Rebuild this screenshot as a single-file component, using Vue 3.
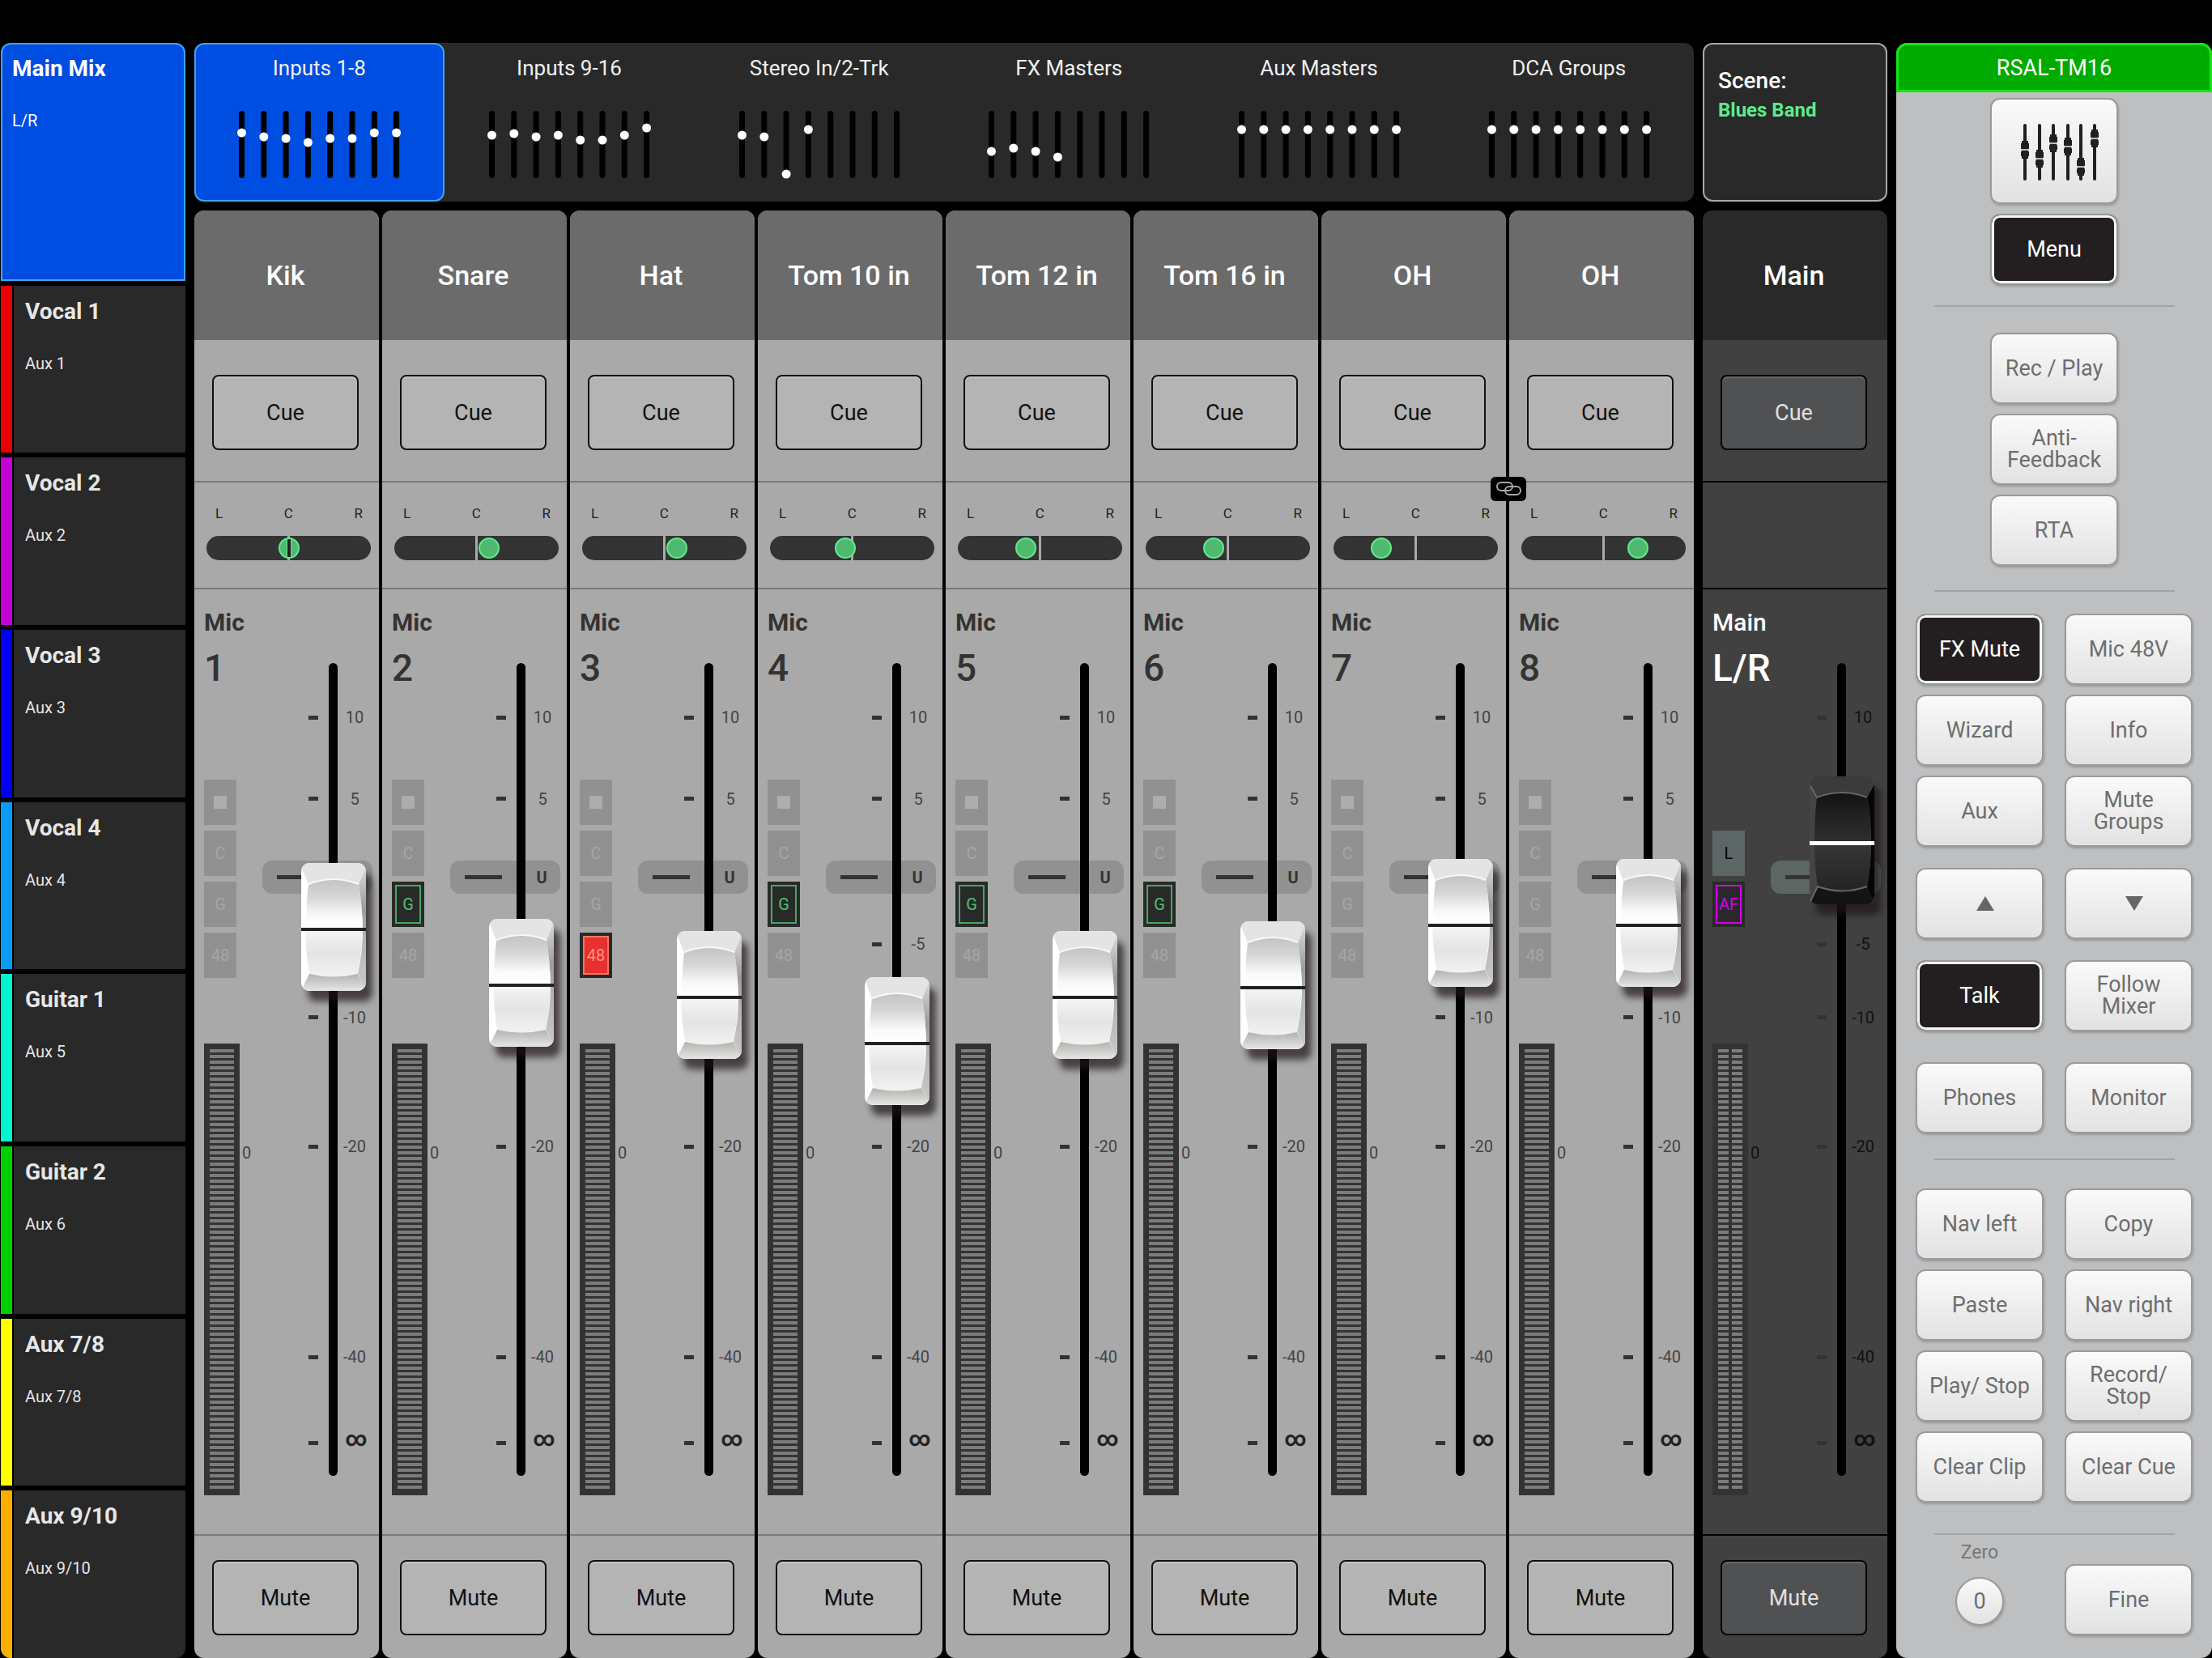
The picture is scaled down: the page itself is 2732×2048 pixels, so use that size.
<script setup>
import { ref, reactive } from "vue"

const mixes = [
  { name: "Vocal 1", sub: "Aux 1", color: "#e80000" },
  { name: "Vocal 2", sub: "Aux 2", color: "#c400d8" },
  { name: "Vocal 3", sub: "Aux 3", color: "#0000f0" },
  { name: "Vocal 4", sub: "Aux 4", color: "#0a9cf5" },
  { name: "Guitar 1", sub: "Aux 5", color: "#00f5d0" },
  { name: "Guitar 2", sub: "Aux 6", color: "#00d000" },
  { name: "Aux 7/8", sub: "Aux 7/8", color: "#ffff00" },
  { name: "Aux 9/10", sub: "Aux 9/10", color: "#fbb000" },
]

const tab = ref("Inputs 1-8")
const tabs = [
  { name: "Inputs 1-8", dots: [27, 32, 34, 39, 34, 34, 27, 27] },
  { name: "Inputs 9-16", dots: [30, 28, 32, 30, 36, 36, 30, 21] },
  { name: "Stereo In/2-Trk", dots: [30, 32, 78, 23] },
  { name: "FX Masters", dots: [50, 46, 50, 57] },
  { name: "Aux Masters", dots: [23, 23, 23, 23, 23, 23, 23, 23] },
  { name: "DCA Groups", dots: [23, 23, 23, 23, 23, 23, 23, 23] },
]

// fader is the distance from the top of the slot, in percent
const strips = reactive([
  { name: "Kik", type: "Mic", num: "1", pan: 50, fader: 32.8 },
  { name: "Snare", type: "Mic", num: "2", pan: 59, fader: 39.6, gate: true },
  { name: "Hat", type: "Mic", num: "3", pan: 59, fader: 41.1, phantom: true },
  { name: "Tom 10 in", type: "Mic", num: "4", pan: 45, fader: 46.8, gate: true },
  { name: "Tom 12 in", type: "Mic", num: "5", pan: 40, fader: 41.1, gate: true },
  { name: "Tom 16 in", type: "Mic", num: "6", pan: 40, fader: 39.9, gate: true },
  { name: "OH", type: "Mic", num: "7", pan: 26, fader: 32.3 },
  { name: "OH", type: "Mic", num: "8", pan: 74, fader: 32.3, linked: true },
  { name: "Main", type: "Main", num: "L/R", fader: 22.1, main: true },
])

const scale = [
  { label: "10", pos: 6.7 },
  { label: "5", pos: 16.7 },
  { label: "U", pos: 26.3, unity: true },
  { label: "-5", pos: 34.6 },
  { label: "-10", pos: 43.6 },
  { label: "-20", pos: 59.5 },
  { label: "-40", pos: 85.4 },
  { label: "∞", pos: 96, inf: true },
]

const menuIcon = [[43, 64], [61, 75], [78, 56], [96, 60], [112, 85], [129, 50]]
const tools = ["Rec / Play", "Anti- Feedback", "RTA"]
const groups = [
  ["FX Mute", "Mic 48V", "Wizard", "Info", "Aux", "Mute Groups"],
  ["up", "down"],
  ["Talk", "Follow Mixer"],
  ["Phones", "Monitor"],
]
const navs = ["Nav left", "Copy", "Paste", "Nav right", "Play/ Stop", "Record/ Stop", "Clear Clip", "Clear Cue"]
const active = ["FX Mute", "Talk"]
</script>

<template>
  <div class="mixer">
    <svg class="defs" width="0" height="0" aria-hidden="true">
      <defs>
        <linearGradient id="w-up" x1="0" y1="0" x2="0" y2="1">
          <stop offset="0" stop-color="#c4c4c4" />
          <stop offset="0.35" stop-color="#d6d6d6" />
          <stop offset="0.75" stop-color="#fafafa" />
          <stop offset="1" stop-color="#fff" />
        </linearGradient>
        <linearGradient id="w-low" x1="0" y1="0" x2="0" y2="1">
          <stop offset="0" stop-color="#f4f4f4" />
          <stop offset="0.5" stop-color="#e4e4e4" />
          <stop offset="1" stop-color="#f2f2f2" />
        </linearGradient>
        <linearGradient id="w-bottom" x1="0" y1="0" x2="0" y2="1">
          <stop offset="0" stop-color="#b2b2ae" />
          <stop offset="1" stop-color="#e6e6e6" />
        </linearGradient>
        <linearGradient id="w-side" x1="0" y1="0" x2="0" y2="1">
          <stop offset="0" stop-color="#d8d8d8" />
          <stop offset="0.35" stop-color="#9c9c9c" />
          <stop offset="0.6" stop-color="#b4b4b4" />
          <stop offset="1" stop-color="#c8c8c8" />
        </linearGradient>
        <linearGradient id="b-up" x1="0" y1="0" x2="0" y2="1">
          <stop offset="0" stop-color="#131313" />
          <stop offset="1" stop-color="#303030" />
        </linearGradient>
        <linearGradient id="b-low" x1="0" y1="0" x2="0" y2="1">
          <stop offset="0" stop-color="#373737" />
          <stop offset="1" stop-color="#242424" />
        </linearGradient>
      </defs>
    </svg>

    <nav class="mixes">
      <button class="main-mix">
        <strong>Main Mix</strong>
        <span>L/R</span>
      </button>
      <button v-for="mix in mixes" :key="mix.name" class="mix">
        <i class="mix-color" :style="{ backgroundColor: mix.color }"></i>
        <span class="mix-body">
          <strong>{{ mix.name }}</strong>
          <span>{{ mix.sub }}</span>
        </span>
      </button>
    </nav>

    <main class="desk">
      <header class="top">
        <div class="tabs">
          <button v-for="t in tabs" :key="t.name" class="tab" :class="{ selected: tab === t.name }" @click="tab = t.name">
            <span>{{ t.name }}</span>
            <svg width="204" height="84" viewBox="0 0 204 84" aria-hidden="true">
              <rect v-for="n in 8" :key="n" :x="(n - 1) * 27.3 + 3" y="0" width="7" height="83" rx="3.5" fill="#000" />
              <circle v-for="(y, i) in t.dots" :key="i" :cx="i * 27.3 + 6.5" :cy="y" r="5.5" fill="#fff" />
            </svg>
          </button>
        </div>
        <section class="scene">
          <strong>Scene:</strong>
          <span>Blues Band</span>
        </section>
      </header>

      <div class="strips">
        <section v-for="(s, i) in strips" :key="i" class="strip" :class="{ 'strip-main': s.main }">
          <h2 class="strip-name">{{ s.name }}</h2>
          <div class="cue">
            <button class="key">Cue</button>
          </div>

          <div class="pan">
            <template v-if="!s.main">
              <div class="pan-labels"><span>L</span><span>C</span><span>R</span></div>
              <input v-model.number="s.pan" type="range" class="pan-slider" :class="{ centered: s.pan === 50 }" :aria-label="`Pan ${s.type} ${s.num}`" />
            </template>
            <div v-if="s.linked" class="link">
              <svg width="31" height="18" viewBox="0 0 31 18" fill="none" stroke="#a9a9a9" stroke-width="2" aria-hidden="true">
                <rect x="1" y="1" width="19" height="10" rx="5" />
                <rect x="11" y="6" width="19" height="10" rx="5" />
              </svg>
            </div>
          </div>

          <div class="fader">
            <div class="info">
              <div class="type">{{ s.type }}</div>
              <div class="num">{{ s.num }}</div>
              <div v-if="s.main" class="badges">
                <span class="badge-none"></span>
                <span class="badge badge-l">L</span>
                <span class="badge badge-af">AF</span>
                <span class="badge-none"></span>
              </div>
              <div v-else class="badges">
                <span class="badge"><i class="square"></i></span>
                <span class="badge">C</span>
                <span class="badge" :class="{ 'badge-gate': s.gate }">G</span>
                <span class="badge" :class="{ 'badge-phantom': s.phantom }">48</span>
              </div>
              <div class="meter">
                <i class="leds"></i>
                <i v-if="s.main" class="leds"></i>
                <span class="meter-zero">0</span>
              </div>
            </div>

            <div class="lane">
              <div v-for="m in scale" :key="m.label" class="mark" :class="{ unity: m.unity, inf: m.inf }" :style="{ top: m.pos + '%' }">
                <i class="tick"></i>
                <span class="mark-label">{{ m.label }}</span>
              </div>
              <input v-model.number="s.fader" type="range" min="0" max="100" step="0.1" class="slot" :aria-label="`Level ${s.type} ${s.num}`" />
              <svg v-if="!s.main" class="cap" viewBox="0 0 80 158" :style="{ top: s.fader + '%' }" aria-hidden="true">
                <rect width="80" height="158" rx="10" fill="#fff" />
                <path d="M10 0H70Q76 0 79 6L71 27Q40 17 9 27L1 6Q4 0 10 0Z" fill="#e4e4e4" />
                <path d="M79 6L80 10V148L78 153L70 136Q76 110 76 82Q75 50 71 27Z" fill="url(#w-side)" />
                <path d="M9 27Q40 15 71 27Q75 50 76 80H6Q6 50 9 27Z" fill="url(#w-up)" />
                <path d="M9 26Q40 14 71 26" fill="none" stroke="#f8f8f8" stroke-width="2" />
                <path d="M5 84H76Q74 114 70 137Q40 144 10 137Q6 112 5 84Z" fill="url(#w-low)" />
                <path d="M10 137Q40 144 70 137L78 153Q75 158 70 158H10Q5 158 2 153Z" fill="url(#w-bottom)" />
                <rect y="80" width="80" height="4" fill="#222" />
              </svg>
              <svg v-else class="cap" viewBox="0 0 80 158" :style="{ top: s.fader + '%' }" aria-hidden="true">
                <rect width="80" height="158" rx="8" fill="#444" />
                <path d="M8 0H72Q78 1 79 8L71 26Q40 16 9 26L1 8Q2 1 8 0Z" fill="#3a3a3a" />
                <path d="M80 10V148L78 154L71 137Q76 110 76 82Q76 50 71 26Z" fill="#050505" />
                <path d="M9 26Q40 14 71 26Q75 50 76 82H6Q6 50 9 26Z" fill="url(#b-up)" />
                <path d="M6 82H76Q75 114 71 136Q40 146 10 136Q6 112 6 82Z" fill="url(#b-low)" />
                <path d="M10 136Q40 146 71 136L79 152Q77 158 70 158H10Q4 158 2 153Z" fill="#141414" />
                <path d="M1 12L9 26Q40 14 71 26M1 154L10 136Q40 147 71 136" fill="none" stroke="#666" stroke-width="2" />
                <rect y="80" width="80" height="5" fill="#fff" />
              </svg>
            </div>
          </div>

          <div class="mute">
            <button class="key">Mute</button>
          </div>
        </section>
      </div>
    </main>

    <aside class="panel">
      <h1 class="device">RSAL-TM16</h1>
      <div class="single">
        <button class="btn btn-faders" aria-label="Faders">
          <svg width="158" height="131" viewBox="0 0 158 131" aria-hidden="true">
            <g v-for="[x, y] in menuIcon" :key="x">
              <rect :x="x - 2" y="32" width="4" height="70" rx="2" fill="#231f20" />
              <path :d="`M${x - 4} ${y - 11}h8v3h1v6l-1 2h-8l-1-2v-6h1zM${x - 4} ${y + 1}h8l1 2v5h-1v3h-8v-3h-1v-5z`" fill="#231f20" />
              <rect :x="x - 4" :y="y - 1" width="8" height="2" fill="#bbb" />
            </g>
          </svg>
        </button>
        <button class="btn on">Menu</button>
      </div>
      <hr>
      <div class="single tools">
        <button v-for="t in tools" :key="t" class="btn">{{ t }}</button>
      </div>
      <hr>
      <div class="groups">
        <div v-for="(g, i) in groups" :key="i" class="pair">
          <button v-for="b in g" :key="b" class="btn" :class="{ on: active.includes(b) }" :aria-label="b">
            <svg v-if="b === 'up'" class="arrow" width="22" height="18" viewBox="0 0 22 18"><path d="M11 0L22 18H0Z" fill="#666" /></svg>
            <svg v-else-if="b === 'down'" class="arrow" width="22" height="18" viewBox="0 0 22 18"><path d="M0 0H22L11 18Z" fill="#666" /></svg>
            <template v-else>{{ b }}</template>
          </button>
        </div>
      </div>
      <hr>
      <div class="pair navs">
        <button v-for="n in navs" :key="n" class="btn">{{ n }}</button>
      </div>
      <hr>
      <div class="pair last">
        <div class="zero">
          <label for="zero">Zero</label>
          <button id="zero" class="round">0</button>
        </div>
        <button class="btn">Fine</button>
      </div>
    </aside>
  </div>
</template>

<style>
body {
  margin: 0;
  background: #000;
}
</style>

<style scoped>
.mixer {
  display: grid;
  grid-template-columns: 228fr 2091fr 390fr;
  gap: 11px;
  box-sizing: border-box;
  min-height: 100vh;
  padding: 53px 0 0 1px;
  background: #000;
  font-family: Roboto, "Liberation Sans", sans-serif;
}

.mixer * {
  box-sizing: border-box;
}

.defs {
  position: absolute;
}

button {
  margin: 0;
  padding: 0;
  border: none;
  background: none;
  font-family: inherit;
  cursor: pointer;
}

h1,
h2 {
  margin: 0;
  font-weight: 500;
}

strong {
  font-weight: 500;
}

.mixes {
  display: grid;
  grid-template-rows: 294fr repeat(8, 207fr);
  gap: 6px;
  min-width: 0;
}

.main-mix,
.mix-body {
  display: flex;
  flex-direction: column;
  justify-content: flex-start;
  gap: 36px;
  text-align: left;
  font-size: 20px;
  line-height: 24px;
}

.main-mix {
  padding: 14px 12px;
  border: 2px solid #3fa4f0;
  border-radius: 12px 12px 0 0;
  background: #004de1;
  color: #fff;
}

.mix {
  display: flex;
  gap: 2px;
}

.mix:last-child {
  border-radius: 0 0 12px 12px;
  overflow: hidden;
}

.mix-color {
  align-self: stretch;
  width: 14px;
}

.mix-body {
  flex: 1;
  align-self: stretch;
  padding: 16px 14px;
  background: #292929;
  color: #e6e6e6;
}

.mixes strong {
  font-size: 28px;
  font-weight: 700;
  line-height: 32px;
}

.desk {
  display: flex;
  flex-direction: column;
  gap: 11px;
  min-width: 0;
}

.top {
  display: grid;
  grid-template-columns: 1852fr 228fr;
  gap: 11px;
  height: 196px;
}

.tabs {
  display: grid;
  grid-template-columns: repeat(6, 1fr);
  border-radius: 12px;
  background: #292929;
}

.tab {
  display: flex;
  flex-direction: column;
  align-items: center;
  gap: 37px;
  padding-top: 13px;
  border: 2px solid transparent;
  border-radius: 12px;
  color: #f0f0f0;
  font-size: 26px;
  line-height: 32px;
}

.tab.selected {
  border-color: #3fa4f0;
  background: #004de1;
}

.scene {
  display: flex;
  flex-direction: column;
  gap: 4px;
  padding: 29px 17px;
  border: 2px solid #a9a9a9;
  border-radius: 12px;
  background: #292929;
  color: #fff;
  font-size: 28px;
  line-height: 32px;
}

.scene span {
  color: #5feb8b;
  font-size: 24px;
  font-weight: 700;
}

.strips {
  display: flex;
  flex: 1;
  gap: 4px;
}

.strip {
  display: flex;
  flex-direction: column;
  flex: 1 1 0;
  min-width: 0;
  border-radius: 12px;
  background: #a9a9a9;
  color: #333;
}

.strip-main {
  margin-left: 7px;
  background: #414141;
  color: #fff;
}

.strip-name {
  height: 160px;
  padding-right: 3px;
  border-radius: 12px 12px 0 0;
  background: #6b6b6b;
  color: #fff;
  font-size: 34px;
  line-height: 161px;
  text-align: center;
  white-space: nowrap;
}

.strip-main .strip-name {
  background: #292929;
}

.cue {
  height: 176px;
  padding: 43px 25px 0 22px;
  border-bottom: 2px solid #7a7a7a;
}

.key {
  width: 100%;
  height: 93px;
  border: 2px solid #111;
  border-radius: 8px;
  background: #b4b4b4;
  box-shadow: inset 0 2px 1px #c4c4c4;
  color: #111;
  font-size: 27px;
}

.strip-main .key {
  border-color: #000;
  background: #505153;
  box-shadow: inset 0 2px 1px #6a6a6a;
  color: #e0e0e0;
}

.pan {
  position: relative;
  height: 132px;
  padding: 28px 10px 0 15px;
  border-bottom: 2px solid #7a7a7a;
}

.strip-main .cue,
.strip-main .pan {
  border-color: #000;
}

.pan-labels {
  display: flex;
  justify-content: space-between;
  padding: 0 10px 0 11px;
  color: #222;
  font-size: 17px;
  line-height: 20px;
}

.pan-slider {
  display: block;
  appearance: none;
  width: 100%;
  height: 30px;
  margin: 18px 0 0;
  padding: 0;
  border-radius: 15px;
  background: linear-gradient(#a9a9a9, #a9a9a9) center / 3px 100% no-repeat #333;
}

.pan-slider::-webkit-slider-thumb {
  appearance: none;
  width: 26px;
  height: 26px;
  border: 2px solid #5feb8b;
  border-radius: 13px;
  background: #50b970;
}

.pan-slider.centered::-webkit-slider-thumb {
  background: linear-gradient(90deg, transparent 8px, #5feb8b 8px, #5feb8b 9px, #222 9px, #222 13px, #5feb8b 13px, #5feb8b 14px, transparent 14px) #50b970;
}

.link {
  position: absolute;
  top: -7px;
  left: -23px;
  z-index: 1;
  display: flex;
  align-items: center;
  justify-content: center;
  width: 44px;
  height: 30px;
  border-radius: 6px;
  background: #000;
}

.fader {
  display: flex;
  flex: 1;
}

.info {
  display: flex;
  flex-direction: column;
  flex: 1;
  min-width: 0;
  padding: 25px 0 48px 12px;
}

.type {
  font-size: 30px;
  font-weight: 500;
  line-height: 32px;
}

.num {
  margin-top: 16px;
  font-size: 46px;
  font-weight: 500;
  line-height: 48px;
}

.strip:not(.strip-main) .type {
  font-weight: 700;
}

.badges {
  display: flex;
  flex-direction: column;
  gap: 7px;
  margin-top: 114px;
}

.badge,
.badge-none {
  display: flex;
  align-items: center;
  justify-content: center;
  width: 40px;
  height: 56px;
}

.badge {
  background: #919191;
  color: #a6a6a6;
  font-size: 20px;
}

.square {
  width: 16px;
  height: 16px;
  background: #adadad;
}

.badge-gate,
.badge-phantom,
.badge-af {
  border: 4px solid #292929;
  background: #292929;
  color: #50c070;
  outline: 2px solid #45a862;
  outline-offset: -6px;
}

.badge-phantom {
  background: #e83030;
  color: #f79a7c;
  outline-color: #f0785a;
}

.badge-l {
  background: #5c6664;
  color: #000;
}

.badge-af {
  color: #d400ea;
  outline-color: #d400ea;
}

.meter {
  position: relative;
  display: flex;
  flex: 1;
  gap: 4px;
  width: 44px;
  min-height: 200px;
  margin-top: 81px;
  padding: 7px;
  background: #333;
}

.leds {
  flex: 1;
  background: repeating-linear-gradient(#7c7c7c 0 4px, #333 4px 7px);
}

.meter-zero {
  position: absolute;
  top: 22%;
  left: 47px;
  color: #444;
  font-size: 20px;
}

.strip-main .meter-zero {
  color: #111;
}

.lane {
  position: relative;
  width: 148px;
  margin: 91px 0 72px;
}

.mark {
  position: absolute;
  left: 0;
  right: 0;
  display: flex;
  align-items: center;
  gap: 20px;
  height: 0;
  padding-left: 61px;
}

.tick {
  width: 12px;
  height: 5px;
  background: #333;
}

.mark-label {
  width: 50px;
  color: #444;
  font-size: 20px;
  text-align: center;
}

.unity {
  right: 8px;
  left: 4px;
  gap: 26px;
  height: 41px;
  margin-top: -20px;
  padding-left: 18px;
  border-radius: 12px;
  background: #919191;
}

.unity .tick {
  flex: none;
  width: 46px;
}

.unity .mark-label {
  flex: none;
  width: 46px;
  color: #333;
  font-weight: 700;
}

.inf .mark-label {
  padding: 0 0 12px 4px;
  color: #222;
  font-size: 26px;
  font-weight: 700;
}

.strip-main .mark-label {
  color: #111;
}

.strip-main .unity {
  background: #5c6664;
}

.slot {
  position: absolute;
  top: 0;
  left: 86px;
  appearance: none;
  width: 11px;
  height: 100%;
  margin: 0;
  border-radius: 6px;
  background: #000;
  writing-mode: vertical-lr;
}

.slot::-webkit-slider-thumb {
  appearance: none;
  width: 11px;
  height: 11px;
  background: transparent;
}

.cap {
  position: absolute;
  left: 52px;
  width: 80px;
  height: 158px;
  margin-top: -82px;
  filter: drop-shadow(8px 13px 4px rgba(30, 20, 20, 0.7));
  pointer-events: none;
}

.mute {
  height: 153px;
  padding: 30px 25px 0 22px;
  border-top: 2px solid #7a7a7a;
}

.strip-main .mute {
  border-color: #000;
}

.panel {
  min-width: 0;
  padding-bottom: 24px;
  border-radius: 14px;
  background: #bdbfc1;
}

.device {
  height: 61px;
  border: 3px solid #14e614;
  border-radius: 14px 14px 0 0;
  background: #00ab00;
  color: #fff;
  font-size: 27px;
  font-weight: 400;
  line-height: 56px;
  text-align: center;
}

.single {
  display: flex;
  flex-direction: column;
  align-items: center;
  gap: 12px;
  padding-top: 7px;
}

.tools {
  padding-top: 0;
}

.btn {
  width: 158px;
  height: 88px;
  padding: 0 8px;
  border: 2px solid #999a9c;
  border-radius: 12px;
  background: linear-gradient(#fafafa, #e2e2e2);
  box-shadow: 1px 2px 3px rgba(0, 0, 0, 0.2);
  color: #6d6e70;
  font-size: 27px;
  line-height: 27px;
}

.btn.on {
  background: #231f20;
  box-shadow: inset 0 0 0 3px #f4f4f4, 1px 2px 3px rgba(0, 0, 0, 0.2);
  color: #fff;
}

.btn-faders {
  display: flex;
  align-items: center;
  justify-content: center;
  height: 131px;
  padding: 0;
}

.btn-faders svg {
  flex: none;
}

.arrow {
  margin-left: 14px;
}

hr {
  width: 297px;
  height: 2px;
  margin: 25px auto 32px;
  border: none;
  background: #a2a3a5;
}

.tools + hr {
  margin: 30px auto 27px;
}

.groups {
  display: flex;
  flex-direction: column;
  gap: 26px;
}

.groups + hr {
  margin: 31px auto 35px;
}

.pair {
  display: grid;
  grid-template-columns: 158px 158px;
  gap: 12px 26px;
  justify-content: center;
}

.groups .pair:last-child {
  margin-top: 12px;
}

.navs + hr {
  margin: 38px auto 8px;
}

.last {
  align-items: end;
}

.zero {
  display: flex;
  flex-direction: column;
  align-items: center;
  gap: 16px;
  padding-bottom: 12px;
  color: #76777a;
  font-size: 23px;
  line-height: 28px;
}

.round {
  width: 60px;
  height: 60px;
  border: 2px solid #999a9c;
  border-radius: 30px;
  background: linear-gradient(#fafafa, #e2e2e2);
  box-shadow: 1px 2px 3px rgba(0, 0, 0, 0.2);
  color: #6d6e70;
  font-size: 27px;
}
</style>
